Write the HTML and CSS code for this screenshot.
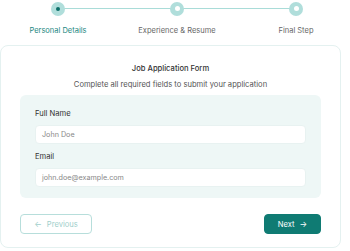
FILE: index.html
```html
<!DOCTYPE html>
<html>
<head>
<meta charset="utf-8">
<link rel="stylesheet" href="styles.css">
</head>
<body>
<div class="page">
  <div class="stepper">
    <div class="track"></div>
    <div class="step active">
      <span class="dot"><span class="core"></span></span>
      <span class="label">Personal Details</span>
    </div>
    <div class="step">
      <span class="dot"><span class="core"></span></span>
      <span class="label">Experience &amp; Resume</span>
    </div>
    <div class="step">
      <span class="dot"><span class="core"></span></span>
      <span class="label">Final Step</span>
    </div>
  </div>
  <div class="card">
    <h1 class="title">Job Application Form</h1>
    <p class="subtitle">Complete all required fields to submit your application</p>
    <div class="panel">
      <label class="field-label">Full Name</label>
      <div class="input">John Doe</div>
      <label class="field-label second">Email</label>
      <div class="input">john.doe@example.com</div>
    </div>
    <div class="actions">
      <button class="btn prev"><span class="arrow">&#8592;</span>Previous</button>
      <button class="btn next">Next<span class="arrow">&#8594;</span></button>
    </div>
  </div>
</div>
</body>
</html>
```
FILE: styles.css
```css
* { box-sizing: border-box; }
html, body { margin: 0; padding: 0; background: #fff; }
body { font-family: Inter, "Noto Sans", sans-serif; color: #333; overflow: hidden; }
.page { width: 341px; }
.stepper {
  position: relative;
  display: flex;
  gap: 19px;
  padding-left: 8px;
  height: 45px;
}
.track {
  position: absolute;
  left: 58px;
  width: 238px;
  top: 8px;
  height: 1px;
  background: #a9dcd8;
}
.step {
  position: relative;
  flex: 0 0 100px;
  display: flex;
  flex-direction: column;
  align-items: center;
}
.dot {
  margin-top: 1.5px;
  width: 14px;
  height: 14px;
  border-radius: 50%;
  background: #b0dedb;
  display: flex;
  align-items: center;
  justify-content: center;
}
.core { width: 5px; height: 5px; border-radius: 50%; background: #fff; }
.step.active .core { width: 4px; height: 4px; background: #0c6e68; }
.label {
  margin-top: 9px;
  font-size: 7.5px;
  line-height: 12px;
  color: #666;
  white-space: nowrap;
}
.step.active .label { color: #23877f; }
.card {
  border: 1px solid #e4f1f0;
  border-radius: 8px;
  padding: 17px 19px 13px;
  background: #fff;
}
.title {
  margin: 0;
  text-align: center;
  font-size: 7.6px;
  font-weight: 500;
  line-height: 12px;
  color: #333;
}
.subtitle {
  margin: 4px 0 0;
  text-align: center;
  font-size: 7.6px;
  line-height: 12px;
  color: #555;
}
.panel {
  margin-top: 4px;
  background: #eef7f6;
  border-radius: 6px;
  padding: 13px 15px 11.5px;
}
.field-label {
  display: block;
  font-size: 7.6px;
  line-height: 12px;
  color: #333;
}
.field-label.second { margin-top: 7.5px; }
.input {
  margin-top: 4.5px;
  height: 19px;
  background: #fff;
  border: 1px solid #e8f2f1;
  border-radius: 4px;
  padding: 0 6px;
  font-size: 7.2px;
  line-height: 17px;
  color: #888;
}
.actions {
  margin-top: 16px;
  display: flex;
  justify-content: space-between;
}
.btn {
  height: 20px;
  border-radius: 4px;
  font-family: inherit;
  font-size: 7.6px;
  display: flex;
  align-items: center;
  justify-content: center;
  gap: 5px;
  padding: 0;
}
.prev {
  width: 72px;
  background: #fff;
  border: 1px solid #b7dedb;
  color: #9fcfcb;
}
.next {
  width: 57px;
  background: #0f7b73;
  border: 1px solid #0f7b73;
  color: #fff;
}
.arrow { font-size: 8px; }
```
